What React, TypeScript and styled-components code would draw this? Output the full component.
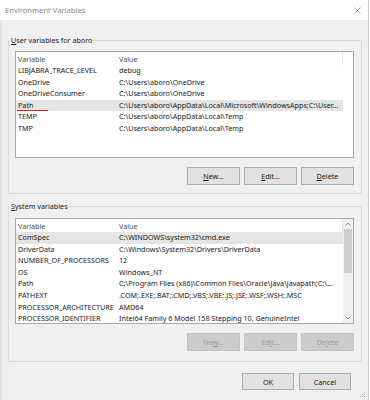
import React from "react";
import styled, { createGlobalStyle } from "styled-components";

const GlobalStyle = createGlobalStyle`
  html, body { margin: 0; padding: 0; background: #ffffff; }
  body { font-family: "Noto Sans", "Open Sans", "DejaVu Sans", sans-serif; }
  #root { width: 370px; height: 400px; }
`;

const Window = styled.div`
  position: relative;
  width: 369px;
  height: 400px;
  box-sizing: border-box;
  background: #f0f0f0;
  border-right: 1px solid #c6c6c6;
  display: flex;
  flex-direction: column;
  font-size: 7.2px;
  color: #1a1a1a;
  overflow: hidden;
`;

const TitleBar = styled.div`
  height: 20px;
  flex: none;
  background: #ffffff;
  display: flex;
  align-items: center;
  justify-content: space-between;
  padding: 0 7px 0 5px;
`;

const Title = styled.span`
  color: #8a8a8a;
  font-size: 7.6px;
`;

const Body = styled.div`
  flex: 1;
  display: flex;
  flex-direction: column;
  border-left: 2px solid #e2e2e2;
  padding: 15px 6px 0 6px;
`;

const Group = styled.fieldset<{ $gapTop?: number; $padTop: number; $padBottom: number }>`
  margin: ${(p) => p.$gapTop ?? 0}px 0 0 0;
  padding: ${(p) => p.$padTop}px 7px ${(p) => p.$padBottom}px 6px;
  border: 1px solid #dadada;
  display: flex;
  flex-direction: column;
  gap: 9px;
  min-width: 0;
`;

const Legend = styled.legend`
  padding: 0 1px;
  margin-left: -5px;
  line-height: 10px;
  color: #1a1a1a;
`;

const ListView = styled.div<{ $h: number }>`
  height: ${(p) => p.$h}px;
  box-sizing: border-box;
  border: 1px solid #a9a9a9;
  background: #ffffff;
  display: flex;
  overflow: hidden;
`;

const Table = styled.div`
  width: 327px;
  flex: none;
  display: flex;
  flex-direction: column;
`;

const HeaderRow = styled.div`
  height: 13px;
  flex: none;
  display: grid;
  grid-template-columns: 101px 1fr;
  align-items: center;
  border-right: 1px solid #e5e5e5;
  color: #4c4c4c;
`;

const Cell = styled.span<{ $marked?: boolean }>`
  position: relative;
  padding-left: 2px;
  white-space: nowrap;
  overflow: visible;
  ${(p) =>
    p.$marked &&
    `
    &::after {
      content: "";
      position: absolute;
      left: 1px;
      bottom: -1px;
      width: 31px;
      height: 2px;
      background: #e21b1b;
    }
  `}
`;

const Row = styled.div<{ $selected?: boolean }>`
  height: 11.6px;
  line-height: 11.6px;
  flex: none;
  display: grid;
  grid-template-columns: 101px 1fr;
  background: ${(p) => (p.$selected ? "#e5e5e5" : "transparent")};
  color: #1a1a1a;
  overflow: hidden;
`;

const ScrollBar = styled.div`
  width: 10px;
  flex: none;
  margin-left: auto;
  background: #f0f0f0;
  display: flex;
  flex-direction: column;
`;

const ScrollArrow = styled.div`
  height: 10px;
  flex: none;
  display: flex;
  align-items: center;
  justify-content: center;
`;

const Thumb = styled.div`
  height: 44px;
  flex: none;
  margin: 0 1px;
  background: #cdcdcd;
`;

const Track = styled.div`
  flex: 1;
`;

const ButtonRow = styled.div<{ $gap: number }>`
  display: flex;
  justify-content: flex-end;
  gap: ${(p) => p.$gap}px;
`;

const Button = styled.button<{ $w: number; $h: number }>`
  width: ${(p) => p.$w}px;
  height: ${(p) => p.$h}px;
  box-sizing: border-box;
  padding: 0;
  margin: 0;
  font: inherit;
  font-size: 7.2px;
  background: #e1e1e1;
  border: 1px solid #adadad;
  color: #1a1a1a;
  &:disabled {
    background: #cccccc;
    border-color: #c4c4c4;
    color: #9c9c9c;
  }
`;

const Footer = styled.div`
  display: flex;
  justify-content: flex-end;
  gap: 5px;
  margin-top: 11px;
  padding-right: 11px;
`;

const Grip = styled.svg`
  position: absolute;
  right: 2px;
  bottom: 2px;
`;

const userVars: [string, string][] = [
  ["LIBJABRA_TRACE_LEVEL", "debug"],
  ["OneDrive", "C:\\Users\\aboro\\OneDrive"],
  ["OneDriveConsumer", "C:\\Users\\aboro\\OneDrive"],
  ["Path", "C:\\Users\\aboro\\AppData\\Local\\Microsoft\\WindowsApps;C:\\User..."],
  ["TEMP", "C:\\Users\\aboro\\AppData\\Local\\Temp"],
  ["TMP", "C:\\Users\\aboro\\AppData\\Local\\Temp"],
];

const sysVars: [string, string][] = [
  ["ComSpec", "C:\\WINDOWS\\system32\\cmd.exe"],
  ["DriverData", "C:\\Windows\\System32\\Drivers\\DriverData"],
  ["NUMBER_OF_PROCESSORS", "12"],
  ["OS", "Windows_NT"],
  ["Path", "C:\\Program Files (x86)\\Common Files\\Oracle\\Java\\javapath;C:\\..."],
  ["PATHEXT", ".COM;.EXE;.BAT;.CMD;.VBS;.VBE;.JS;.JSE;.WSF;.WSH;.MSC"],
  ["PROCESSOR_ARCHITECTURE", "AMD64"],
  ["PROCESSOR_IDENTIFIER", "Intel64 Family 6 Model 158 Stepping 10, GenuineIntel"],
];

const Chevron = ({ up }: { up?: boolean }) => (
  <svg width="6" height="4" viewBox="0 0 6 4">
    <polyline
      points={up ? "0.5,3.5 3,1 5.5,3.5" : "0.5,0.5 3,3 5.5,0.5"}
      fill="none"
      stroke="#8a8a8a"
      strokeWidth="0.9"
    />
  </svg>
);

const Header = () => (
  <HeaderRow>
    <Cell>Variable</Cell>
    <Cell>Value</Cell>
  </HeaderRow>
);

export default function App() {
  return (
    <>
      <GlobalStyle />
      <Window>
        <TitleBar>
          <Title>Environment Variables</Title>
          <svg width="7" height="7" viewBox="0 0 7 7">
            <path d="M0.5 0.5 L6.5 6.5 M6.5 0.5 L0.5 6.5" stroke="#9a9a9a" strokeWidth="0.8" />
          </svg>
        </TitleBar>
        <Body>
          <Group $padTop={6} $padBottom={8}>
            <Legend>
              <u>U</u>ser variables for aboro
            </Legend>
            <ListView $h={107}>
              <Table>
                <Header />
                {userVars.map(([k, v]) => (
                  <Row key={k} $selected={k === "Path"}>
                    <Cell $marked={k === "Path"}>{k}</Cell>
                    <Cell>{v}</Cell>
                  </Row>
                ))}
              </Table>
            </ListView>
            <ButtonRow $gap={4}>
              <Button $w={53} $h={18}>
                <u>N</u>ew...
              </Button>
              <Button $w={53} $h={18}>
                <u>E</u>dit...
              </Button>
              <Button $w={53} $h={18}>
                <u>D</u>elete
              </Button>
            </ButtonRow>
          </Group>
          <Group $gapTop={7} $padTop={7} $padBottom={10}>
            <Legend>
              <u>S</u>ystem variables
            </Legend>
            <ListView $h={106}>
              <Table>
                <Header />
                {sysVars.map(([k, v]) => (
                  <Row key={k} $selected={k === "ComSpec"}>
                    <Cell>{k}</Cell>
                    <Cell>{v}</Cell>
                  </Row>
                ))}
              </Table>
              <ScrollBar>
                <ScrollArrow>
                  <Chevron up />
                </ScrollArrow>
                <Thumb />
                <Track />
                <ScrollArrow>
                  <Chevron />
                </ScrollArrow>
              </ScrollBar>
            </ListView>
            <ButtonRow $gap={4}>
              <Button $w={53} $h={18} disabled>
                Ne<u>w</u>...
              </Button>
              <Button $w={53} $h={18} disabled>
                Ed<u>i</u>t...
              </Button>
              <Button $w={53} $h={18} disabled>
                De<u>l</u>ete
              </Button>
            </ButtonRow>
          </Group>
          <Footer>
            <Button $w={52} $h={17}>OK</Button>
            <Button $w={52} $h={17}>Cancel</Button>
          </Footer>
        </Body>
        <Grip width="6" height="6" viewBox="0 0 6 6">
          <rect x="4" y="0" width="1" height="1" fill="#b8b8b8" />
          <rect x="2" y="2" width="1" height="1" fill="#b8b8b8" />
          <rect x="4" y="2" width="1" height="1" fill="#b8b8b8" />
          <rect x="0" y="4" width="1" height="1" fill="#b8b8b8" />
          <rect x="2" y="4" width="1" height="1" fill="#b8b8b8" />
          <rect x="4" y="4" width="1" height="1" fill="#b8b8b8" />
        </Grip>
      </Window>
    </>
  );
}
